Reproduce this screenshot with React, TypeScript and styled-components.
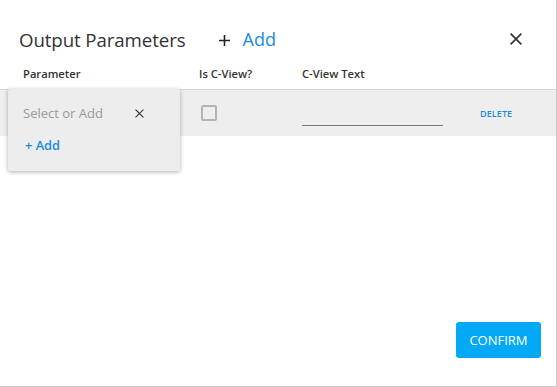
import React from "react";
import styled, { createGlobalStyle } from "styled-components";

const Global = createGlobalStyle`
  html, body { margin: 0; padding: 0; background: #fff; }
  body { font-family: "Open Sans", "Noto Sans", sans-serif; color: #333; }
`;

const Dialog = styled.div`
  width: 556px;
  height: 386px;
  border-right: 1px solid #c9c9c9;
  border-bottom: 1px solid #c9c9c9;
  display: flex;
  flex-direction: column;
  position: relative;
  background: #fff;
`;

const TitleBar = styled.div`
  display: flex;
  align-items: center;
  height: 26px;
  margin-top: 26px;
  padding: 0 33px 0 19px;
`;

const Title = styled.h1`
  margin: 0;
  font-size: 18.7px;
  font-weight: 400;
  color: #333;
  letter-spacing: -0.1px;
`;

const AddLink = styled.button`
  margin-left: 33px;
  border: 0;
  background: none;
  padding: 0;
  display: flex;
  align-items: center;
  gap: 13px;
  font-family: inherit;
  font-size: 18px;
  color: #1a8ce0;
  cursor: pointer;
`;

const PlusIcon = styled.svg`
  display: block;
  margin-top: 2px;
`;

const CloseBtn = styled.button`
  margin-left: auto;
  border: 0;
  background: none;
  padding: 0;
  width: 14px;
  height: 14px;
  display: flex;
  align-items: center;
  justify-content: center;
  cursor: pointer;
`;

const Table = styled.div`
  position: relative;
  margin-top: 12px;
`;

const HeadRow = styled.div`
  display: grid;
  grid-template-columns: 176px 103px 178px 1fr;
  align-items: start;
  padding-left: 23px;
  height: 25px;
  box-sizing: border-box;
  padding-top: 2px;
`;

const BodyRow = styled.div`
  display: grid;
  grid-template-columns: 176px 103px 178px 1fr;
  align-items: center;
  padding-left: 23px;
  height: 46px;
  background: #eeeeee;
  border-top: 1px solid #d6d6d6;
`;

const HeadCell = styled.div`
  font-size: 11.2px;
  font-weight: 600;
  color: #333;
`;

const Checkbox = styled.span`
  display: block;
  width: 12px;
  height: 12px;
  margin-left: 2px;
  border: 2px solid #b3b3b3;
  border-radius: 2px;
  background: transparent;
`;

const TextInput = styled.input`
  display: block;
  width: 141px;
  margin-top: 10px;
  border: 0;
  border-bottom: 1px solid #777;
  background: transparent;
  padding: 0;
  height: 14px;
  outline: none;
`;

const DeleteBtn = styled.button`
  justify-self: start;
  border: 0;
  background: none;
  padding: 0;
  font-family: inherit;
  font-size: 9px;
  font-weight: 600;
  color: #1a8ce0;
  letter-spacing: 0.1px;
  cursor: pointer;
`;

const Popup = styled.div`
  position: absolute;
  left: 8px;
  top: 25px;
  width: 172px;
  height: 82px;
  box-sizing: border-box;
  background: #ededed;
  border-radius: 2px;
  box-shadow: 0 1px 4px rgba(0, 0, 0, 0.32);
  display: flex;
  flex-direction: column;
  padding: 15px 0 0 15px;
`;

const PopupTop = styled.div`
  display: flex;
  align-items: center;
  width: 121px;
  justify-content: space-between;
`;

const Placeholder = styled.span`
  font-size: 13px;
  color: #999;
`;

const PopupAdd = styled.button`
  margin-top: 14px;
  margin-left: 2px;
  align-self: flex-start;
  border: 0;
  background: none;
  padding: 0;
  font-family: inherit;
  font-size: 12.8px;
  font-weight: 600;
  color: #1a8ce0;
  cursor: pointer;
`;

const Footer = styled.div`
  margin-top: auto;
  display: flex;
  justify-content: flex-end;
  padding: 0 15px 28px 0;
`;

const Confirm = styled.button`
  width: 85px;
  height: 36px;
  border: 0;
  border-radius: 3px;
  background: #03a9f4;
  color: #fff;
  font-family: inherit;
  font-size: 13px;
  font-weight: 400;
  cursor: pointer;
`;

const X = ({ size, stroke, color }: { size: number; stroke: number; color: string }) => (
  <svg width={size} height={size} viewBox="0 0 10 10">
    <path d="M1 1 L9 9 M9 1 L1 9" stroke={color} strokeWidth={stroke} strokeLinecap="square" fill="none" />
  </svg>
);

export default function App() {
  return (
    <>
      <Global />
      <Dialog>
        <TitleBar>
          <Title>Output Parameters</Title>
          <AddLink>
            <PlusIcon width="11" height="11" viewBox="0 0 11 11">
              <path d="M5.5 0 V11 M0 5.5 H11" stroke="#222" strokeWidth="1.6" fill="none" />
            </PlusIcon>
            <span>Add</span>
          </AddLink>
          <CloseBtn>
            <X size={12} stroke={1.4} color="#333" />
          </CloseBtn>
        </TitleBar>
        <Table>
          <HeadRow>
            <HeadCell>Parameter</HeadCell>
            <HeadCell>Is C-View?</HeadCell>
            <HeadCell>C-View Text</HeadCell>
            <div />
          </HeadRow>
          <BodyRow>
            <div />
            <Checkbox />
            <TextInput />
            <DeleteBtn>DELETE</DeleteBtn>
          </BodyRow>
          <Popup>
            <PopupTop>
              <Placeholder>Select or Add</Placeholder>
              <X size={9} stroke={1.2} color="#333" />
            </PopupTop>
            <PopupAdd>+ Add</PopupAdd>
          </Popup>
        </Table>
        <Footer>
          <Confirm>CONFIRM</Confirm>
        </Footer>
      </Dialog>
    </>
  );
}
